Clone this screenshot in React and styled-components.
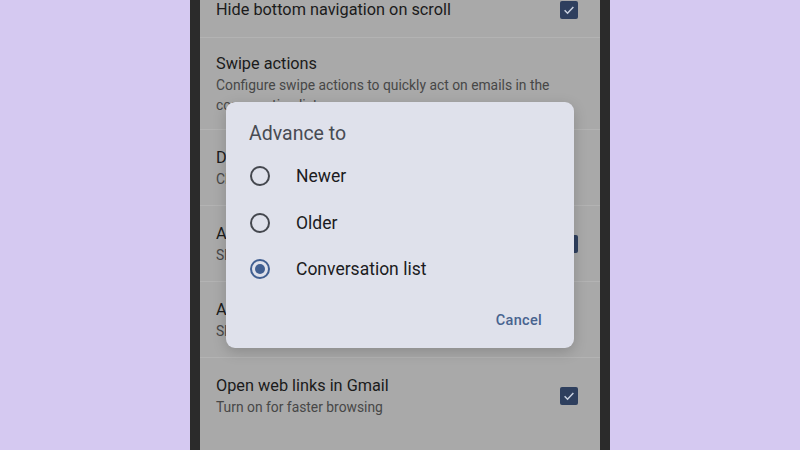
import React from "react";
import styled, { createGlobalStyle } from "styled-components";

const Global = createGlobalStyle`
  html, body { margin: 0; padding: 0; }
  body {
    width: 800px;
    height: 450px;
    overflow: hidden;
    background: #d5c9f1;
    font-family: Roboto, "Noto Sans", Arial, sans-serif;
  }
`;

const Stage = styled.div`
  width: 800px;
  height: 450px;
  display: flex;
  justify-content: center;
`;

const Phone = styled.div`
  width: 400px;
  height: 450px;
  border-left: 10px solid #2b2b2b;
  border-right: 10px solid #2b2b2b;
  position: relative;
  overflow: hidden;
  background: #a9a9a9;
`;

const List = styled.div`
  display: flex;
  flex-direction: column;
  margin-top: -18px;
`;

const Row = styled.div`
  display: flex;
  align-items: center;
  gap: 16px;
  padding: 17px 22px 17px 16px;
  border-bottom: 1px solid #b3b3b3;
  box-sizing: border-box;
  height: ${(p) => p.$h}px;
  &:last-child {
    border-bottom: none;
  }
`;

const RowText = styled.div`
  flex: 1;
  display: flex;
  flex-direction: column;
`;

const RowTitle = styled.div`
  font-size: 16.3px;
  line-height: 22px;
  color: #1b1b1b;
`;

const RowDesc = styled.div`
  font-size: 13.85px;
  line-height: 20px;
  color: #474747;
`;

const Check = styled.div`
  width: 18px;
  height: 18px;
  border-radius: 2px;
  background: #2e3f5e;
  display: flex;
  align-items: center;
  justify-content: center;
  flex-shrink: 0;
`;

const Overlay = styled.div`
  position: absolute;
  left: 26px;
  top: 102px;
  width: 348px;
  height: 246px;
  box-sizing: border-box;
  background: #dfe1eb;
  border-radius: 9px;
  box-shadow: 0 4px 14px rgba(0, 0, 0, 0.18);
  padding: 20px 24px 10px 24px;
  display: flex;
  flex-direction: column;
`;

const DialogTitle = styled.div`
  font-size: 19.5px;
  line-height: 24px;
  color: #484b53;
  margin-left: -1px;
  margin-bottom: 7px;
`;

const Option = styled.div`
  height: 46.6px;
  display: flex;
  align-items: center;
  gap: 26px;
`;

const Radio = styled.div`
  width: 20px;
  height: 20px;
  box-sizing: border-box;
  border-radius: 50%;
  border: 2px solid ${(p) => (p.$on ? "#415f91" : "#44474e")};
  display: flex;
  align-items: center;
  justify-content: center;
  &::after {
    content: "";
    display: ${(p) => (p.$on ? "block" : "none")};
    width: 10px;
    height: 10px;
    border-radius: 50%;
    background: #415f91;
  }
`;

const OptionLabel = styled.div`
  font-size: 17.5px;
  color: #1b1b21;
`;

const Actions = styled.div`
  margin-top: auto;
  display: flex;
  justify-content: flex-end;
`;

const TextButton = styled.div`
  height: 36px;
  padding: 0 8px;
  display: flex;
  align-items: center;
  font-size: 14.5px;
  font-weight: 500;
  letter-spacing: 0.3px;
  color: #48638f;
`;

const CheckIcon = () => (
  <svg width="14" height="14" viewBox="0 0 24 24">
    <path d="M4.5 12.5l5 5 10-10.5" fill="none" stroke="#c9d1e0" strokeWidth="2.6" />
  </svg>
);

const rows = [
  { title: "Hide bottom navigation on scroll", check: true, h: 56 },
  {
    title: "Swipe actions",
    desc: ["Configure swipe actions to quickly act on emails in the", "conversation list"],
    h: 92,
  },
  { title: "Default notification action", desc: ["Choose whether to archive or delete"], h: 76 },
  { title: "Auto-fit messages", desc: ["Shrink messages to fit the screen"], check: true, h: 76 },
  { title: "Auto-advance", desc: ["Show conversation list after you archive or delete"], h: 76 },
  { title: "Open web links in Gmail", desc: ["Turn on for faster browsing"], check: true, h: 76 },
];

const options = [
  { label: "Newer" },
  { label: "Older" },
  { label: "Conversation list", on: true },
];

export default function App() {
  return (
    <>
      <Global />
      <Stage>
        <Phone>
          <List>
            {rows.map((r) => (
              <Row key={r.title} $h={r.h}>
                <RowText>
                  <RowTitle>{r.title}</RowTitle>
                  {r.desc && r.desc.map((d) => <RowDesc key={d}>{d}</RowDesc>)}
                </RowText>
                {r.check && (
                  <Check>
                    <CheckIcon />
                  </Check>
                )}
              </Row>
            ))}
          </List>
          <Overlay>
            <DialogTitle>Advance to</DialogTitle>
            {options.map((o) => (
              <Option key={o.label}>
                <Radio $on={o.on} />
                <OptionLabel>{o.label}</OptionLabel>
              </Option>
            ))}
            <Actions>
              <TextButton>Cancel</TextButton>
            </Actions>
          </Overlay>
        </Phone>
      </Stage>
    </>
  );
}
